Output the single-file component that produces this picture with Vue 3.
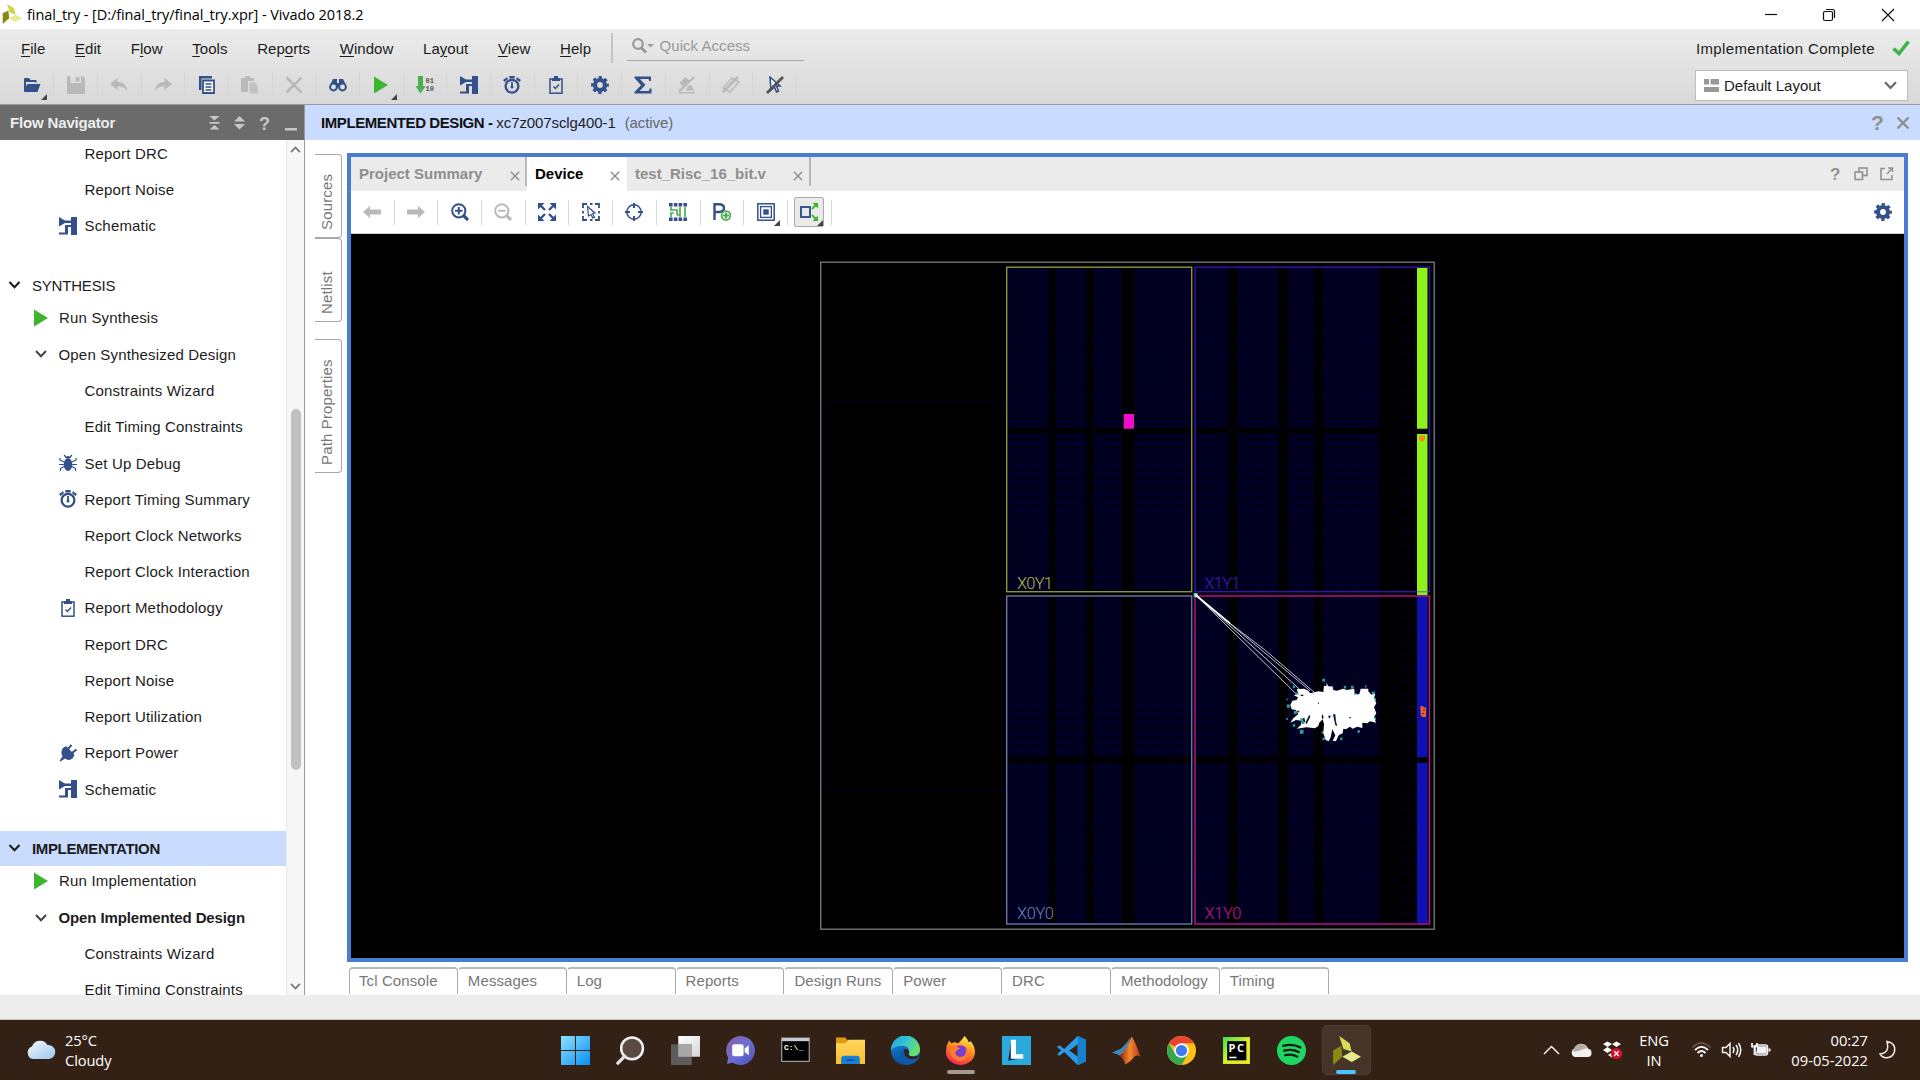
<script setup>
const menus = [
  ['', 'F', 'ile'], ['', 'E', 'dit'], ['F', 'l', 'ow'], ['', 'T', 'ools'], ['Rep', 'o', 'rts'],
  ['', 'W', 'indow'], ['La', 'y', 'out'], ['', 'V', 'iew'], ['', 'H', 'elp'],
]
const tools = [
  { i: 'open', c: 'navy', more: true }, { i: 'save', c: 'dim' }, { i: 'undo', c: 'dim' }, { i: 'redo', c: 'dim' },
  { i: 'copy', c: 'navy' }, { i: 'paste', c: 'dim' }, { i: 'cross', c: 'dim' }, { i: 'binoc', c: 'navy' },
  { i: 'play', c: 'green', more: true }, { i: 'bits', c: 'green' }, { i: 'schem', c: 'navy' }, { i: 'watch', c: 'navy' },
  { i: 'clip', c: 'navy' }, { i: 'gear', c: 'navy' }, { i: 'sigma', c: 'navy' }, { i: 'unmark', c: 'dim' },
  { i: 'unhigh', c: 'dim' }, { i: 'unsel', c: 'navy' },
]
const nav = [
  { k: 'leaf', t: 'Report DRC' }, { k: 'leaf', t: 'Report Noise' }, { k: 'leaf', t: 'Schematic', i: 'schem' },
  { k: 'head', t: 'SYNTHESIS' },
  { k: 'run', t: 'Run Synthesis' },
  { k: 'open', t: 'Open Synthesized Design' },
  { k: 'leaf', t: 'Constraints Wizard' }, { k: 'leaf', t: 'Edit Timing Constraints' },
  { k: 'leaf', t: 'Set Up Debug', i: 'bug' }, { k: 'leaf', t: 'Report Timing Summary', i: 'watch' },
  { k: 'leaf', t: 'Report Clock Networks' }, { k: 'leaf', t: 'Report Clock Interaction' },
  { k: 'leaf', t: 'Report Methodology', i: 'clip' }, { k: 'leaf', t: 'Report DRC' }, { k: 'leaf', t: 'Report Noise' },
  { k: 'leaf', t: 'Report Utilization' }, { k: 'leaf', t: 'Report Power', i: 'plug' }, { k: 'leaf', t: 'Schematic', i: 'schem' },
  { k: 'head', t: 'IMPLEMENTATION', on: true },
  { k: 'run', t: 'Run Implementation' },
  { k: 'open', t: 'Open Implemented Design', b: true },
  { k: 'leaf', t: 'Constraints Wizard' }, { k: 'leaf', t: 'Edit Timing Constraints' },
]
const devTools = [
  { i: 'left', c: 'dim' }, { i: 'right', c: 'dim' }, { i: 'zin', c: 'navy' }, { i: 'zout', c: 'dim' }, { i: 'fit', c: 'navy' },
  { i: 'selarea', c: 'navy' }, { i: 'target', c: 'navy' }, { i: 'route', c: 'navy' }, { i: 'pblock', c: 'navy' },
  { i: 'nest', c: 'navy', more: true }, { i: 'conn', c: 'navy', more: true, on: true },
]
const consoles = ['Tcl Console', 'Messages', 'Log', 'Reports', 'Design Runs', 'Power', 'DRC', 'Methodology', 'Timing']
const apps = ['win', 'find', 'tasks', 'chat', 'cmd', 'files', 'edge', 'fox', 'lapp', 'code', 'matlab', 'chrome', 'pycharm', 'spotify', 'vivado']

const cols = [
  [1008, 41], [1056, 30], [1093, 29], [1135, 56],
  [1196, 32], [1237, 41], [1288, 26], [1323, 56],
]
const bands = [[268, 160], [434, 157], [597, 160], [763, 160]]
const fabric = bands.flatMap(([y, h]) => cols.map(([x, w]) => ({ x, y, w, h })))
const gaps = [1049, 1086, 1228, 1278, 1314]
const gapTicks = [299, 331, 363, 395, 428, 466, 499, 532, 563, 628, 660, 692, 724, 795, 828, 860, 893]
  .flatMap(y => gaps.map(x => ({ x, y })))
const ioTicks = bands.flatMap(([y]) => Array.from({ length: 12 }, (_, n) => y + 6 + n * 13))
const specks = [
  [521, 330, 8], [432, 350, 7], [546, 351, 7], [585, 351, 7], [607, 351, 8], [647, 349, 5], [411, 388, 4], [415, 408, 9],
  [411, 446, 5], [432, 466, 7], [455, 485, 11], [440, 372, 9], [670, 370, 10], [674, 388, 8], [674, 446, 8], [626, 484, 7],
  [521, 506, 7], [575, 484, 8], [574, 506, 7], [565, 456, 8], [436, 427, 9], [518, 487, 6], [575, 370, 8], [616, 372, 7],
]
</script>

<template>
  <div class="screen">
    <svg class="defs" width="0" height="0">
      <defs>
        <linearGradient id="gWin" x1="0" y1="0" x2="1" y2="1"><stop offset="0" stop-color="#8be2ff" /><stop offset="1" stop-color="#0a8df5" /></linearGradient>
        <linearGradient id="gChat" x1="0" y1="0" x2="1" y2="1"><stop offset="0" stop-color="#8a5aa8" /><stop offset=".5" stop-color="#6d6fd0" /><stop offset="1" stop-color="#4a50c0" /></linearGradient>
        <linearGradient id="gFold" x1="0" y1="0" x2="0" y2="1"><stop offset="0" stop-color="#ffd75e" /><stop offset="1" stop-color="#fbbd2e" /></linearGradient>
        <linearGradient id="gEdge" x1="0" y1="0" x2="1" y2=".5"><stop offset="0" stop-color="#1fa0dc" /><stop offset=".5" stop-color="#35c1d8" /><stop offset="1" stop-color="#69e06a" /></linearGradient>
        <linearGradient id="gEdge2" x1="0" y1="0" x2="0" y2="1"><stop offset="0" stop-color="#1387d8" /><stop offset="1" stop-color="#0c4f9e" /></linearGradient>
        <linearGradient id="gFox" x1=".7" y1="0" x2=".3" y2="1"><stop offset="0" stop-color="#fff04a" /><stop offset=".45" stop-color="#ff8a1e" /><stop offset="1" stop-color="#f5205e" /></linearGradient>
        <linearGradient id="gTask" x1="0" y1="0" x2="1" y2="1"><stop offset="0" stop-color="#fff" /><stop offset="1" stop-color="#d5d5d5" /></linearGradient>
        <linearGradient id="gMat" x1="0" y1="0" x2="1" y2="0"><stop offset="0" stop-color="#8c1c10" /><stop offset=".5" stop-color="#f58a2a" /><stop offset="1" stop-color="#b5321a" /></linearGradient>
        <linearGradient id="gPc" x1="0" y1="0" x2="1" y2="1"><stop offset="0" stop-color="#3de05a" /><stop offset=".5" stop-color="#d8f02a" /><stop offset="1" stop-color="#f0e62a" /></linearGradient>
        <linearGradient id="gCloud" x1="0" y1="0" x2="1" y2="1"><stop offset="0" stop-color="#f4faff" /><stop offset="1" stop-color="#9cc6ee" /></linearGradient>
        <pattern id="grid" patternUnits="userSpaceOnUse" width="5" height="7.5">
          <rect width="5" height="7.5" fill="#00001a" /><path d="M0 .5H5" stroke="#00003a" /><path d="M.5 0V7.5" stroke="#00002a" />
        </pattern>
      </defs>
      <symbol id="logo" viewBox="0 0 28 28"><path d="M7 0L17 6L19 15L11 12Z" fill="#cfd24a" /><path d="M1 13L9 9L10 20L1 28Z" fill="#8a8a12" /><path d="M10 20L19 15L28 20L19 25Z" fill="#e6ea8e" /></symbol>
      <symbol id="open" viewBox="0 0 18 18"><path d="M1 15V3.200Q1 2 2.200 2H6L7.500 4H13.500V6.500H12V6H3V10.500L4.500 8H17.500L14.500 16H2Q1 16 1 15Z" fill="currentColor" /></symbol>
      <symbol id="save" viewBox="0 0 18 18"><path d="M0 0H3.500V7H14V0H15.500L18 2.500V18H0ZM8.500 1H12.500V5.500H8.500Z" fill="currentColor" /></symbol>
      <symbol id="undo" viewBox="0 0 18 18"><path d="M0 8L7.500 2V5.800Q16 6 17.500 15Q13.500 10 7.500 10.300V14Z" fill="currentColor" /></symbol>
      <symbol id="redo" viewBox="0 0 18 18"><path d="M18 8L10.500 2V5.800Q2 6 .5 15Q4.500 10 10.500 10.300V14Z" fill="currentColor" /></symbol>
      <symbol id="copy" viewBox="0 0 18 18"><path d="M1 0H14V2.500H3.500V14H1Z" fill="currentColor" /><path d="M5 4.500H16V17H5Z" fill="#fff" stroke="currentColor" stroke-width="1.800" /><path d="M7.500 8H13.500M7.500 11H13.500M7.500 14H13.500" stroke="currentColor" stroke-width="1.400" /></symbol>
      <symbol id="paste" viewBox="0 0 18 18"><path d="M0 2H4V0H9V2H13V5H7V16H0Z" fill="currentColor" /><path d="M8.500 6.500H13.500L17 10V17.500H8.500Z" fill="currentColor" opacity=".75" /></symbol>
      <symbol id="cross" viewBox="0 0 18 18"><path d="M1.500 1.500L16.500 16.500M16.500 1.500L1.500 16.500" stroke="currentColor" stroke-width="2.600" /></symbol>
      <symbol id="binoc" viewBox="0 0 18 18"><path d="M4 3H8V7H10V3H14L17 9V11H1V9Z" fill="currentColor" /><circle cx="4.500" cy="11" r="3.400" fill="#dfe3ec" stroke="currentColor" stroke-width="2" /><circle cx="13.500" cy="11" r="3.400" fill="#dfe3ec" stroke="currentColor" stroke-width="2" /></symbol>
      <symbol id="play" viewBox="0 0 18 18"><path d="M2 .5L16 9L2 17.500Z" fill="#3fb52f" /></symbol>
      <symbol id="bits" viewBox="0 0 18 18"><path d="M2 0H7V10H9.500L4.500 17.500L-.5 10H2Z" fill="#4caf50" /></symbol>
      <symbol id="schem" viewBox="0 0 18 18"><path d="M0 0L6 3.500H12V0H18V18H12V10H9V17.500H0V15.500H6V8H12V6H6L0 9.500Z" fill="currentColor" /></symbol>
      <symbol id="watch" viewBox="0 0 18 18"><circle cx="9" cy="10.200" r="6.400" fill="none" stroke="currentColor" stroke-width="2.300" /><path d="M6.300 0H11.700V2.500H6.300ZM0 4L4 1.200L5 3L1.500 6ZM18 4L14 1.200L13 3L16.500 6Z" fill="currentColor" /><path d="M9 6V11" stroke="currentColor" stroke-width="1.800" /><circle cx="9" cy="11" r="1.500" fill="currentColor" /></symbol>
      <symbol id="clip" viewBox="0 0 18 18"><rect x="3" y="3" width="12" height="14.200" fill="none" stroke="currentColor" stroke-width="1.500" /><path d="M5 2H7V0H11V2H13V5H5Z" fill="currentColor" /><path d="M6.500 10.500L8.500 12.500L12 8.500" fill="none" stroke="currentColor" stroke-width="1.500" /></symbol>
      <symbol id="gear" viewBox="0 0 18 18"><circle cx="9" cy="9" r="5" fill="none" stroke="currentColor" stroke-width="4.200" /><circle cx="9" cy="9" r="7.600" fill="none" stroke="currentColor" stroke-width="2.600" stroke-dasharray="3.300 2.670" stroke-dashoffset="1.650" /></symbol>
      <symbol id="sigma" viewBox="0 0 18 18"><path d="M.5 .5H17V5H15.300L14.500 3H6L11.500 9L5.500 15H14.800L15.800 12.500H17.500V17.500H.5V16L7 9.200L.5 2Z" fill="currentColor" /></symbol>
      <symbol id="unmark" viewBox="0 0 18 18"><path d="M1.500 7L7.500 1L12 5.500L6 11.500Z" fill="currentColor" /><path d="M9.500 10.500L13 9L16.500 14.500H8ZM1 16H17V17.500H1Z" fill="currentColor" /><path d="M1 15.500L16 1" stroke="currentColor" stroke-width="2.200" /></symbol>
      <symbol id="unhigh" viewBox="0 0 18 18"><path d="M1 12L10 2L17 6L8 16Z" fill="none" stroke="currentColor" stroke-width="1.400" /><path d="M1 16L16 1" stroke="currentColor" stroke-width="2.600" /></symbol>
      <symbol id="unsel" viewBox="0 0 18 18"><path d="M4 1L14 10H10.500L12.500 15L10.500 16L8.500 11L5 14Z" fill="#fff" stroke="currentColor" stroke-width="1.600" /><path d="M1 17L17 1" stroke="#555" stroke-width="2.800" /></symbol>
      <symbol id="bug" viewBox="0 0 18 18"><ellipse cx="9" cy="10.500" rx="4.300" ry="6.500" fill="currentColor" /><path d="M5.500 4Q9 0 12.500 4Z" fill="currentColor" /><path d="M5 1L7 3M13 1L11 3M1 4V6L5 8M17 4V6L13 8M0 10.500H18M1.500 17V14.500L5 12.500M16.500 17V14.500L13 12.500" fill="none" stroke="currentColor" stroke-width="1.200" /></symbol>
      <symbol id="plug" viewBox="0 0 18 18"><path d="M4 4L7 2L15.500 10.500L14 14Q10 17.500 6 14.500L1.500 17.500L.5 16.500L3.500 12.500Q1 8 4 4Z" fill="currentColor" /><path d="M9 5L12.500 .8M13 9L17.500 5.500" stroke="currentColor" stroke-width="2" /></symbol>
      <symbol id="left" viewBox="0 0 18 18"><path d="M0 9L7 3V6.500H18V11.500H7V15Z" fill="currentColor" /></symbol>
      <symbol id="right" viewBox="0 0 18 18"><path d="M18 9L11 3V6.500H0V11.500H11V15Z" fill="currentColor" /></symbol>
      <symbol id="zin" viewBox="0 0 18 18"><circle cx="7.800" cy="7.800" r="6.600" fill="none" stroke="currentColor" stroke-width="2" /><path d="M12.500 12.500L17 17" stroke="currentColor" stroke-width="3.200" /><path d="M4 7.800H11.600M7.800 4V11.600" stroke="currentColor" stroke-width="2" /></symbol>
      <symbol id="zout" viewBox="0 0 18 18"><circle cx="7.800" cy="7.800" r="6.600" fill="none" stroke="currentColor" stroke-width="2" /><path d="M12.500 12.500L17 17" stroke="currentColor" stroke-width="3.200" /><path d="M4 7.800H11.600" stroke="currentColor" stroke-width="1.800" /></symbol>
      <symbol id="fit" viewBox="0 0 18 18"><path d="M0 0H6.500L0 6.500ZM18 0H11.500L18 6.500ZM0 18H6.500L0 11.500ZM18 18H11.500L18 11.500Z" fill="currentColor" /><path d="M2 2L7 7M16 2L11 7M2 16L7 11M16 16L11 11" stroke="currentColor" stroke-width="2.400" /></symbol>
      <symbol id="selarea" viewBox="0 0 18 18"><path d="M1 5V1H5M13 1H17V5M17 13V17H13M5 17H1V13M8 1H10.500M8 17H10.500M1 8V10.500M17 8V10.500" fill="none" stroke="currentColor" stroke-width="1.800" /><path d="M5.500 3.500L13 10L10.500 10.500L12.500 14.500L10.800 15L9 11.500L6.500 13Z" fill="#fff" stroke="currentColor" stroke-width="1.200" /></symbol>
      <symbol id="target" viewBox="0 0 18 18"><circle cx="9" cy="9" r="7.200" fill="none" stroke="currentColor" stroke-width="1.500" /><path d="M9 0V5M9 13V18M0 9H5M13 9H18" stroke="currentColor" stroke-width="2" /></symbol>
      <symbol id="route" viewBox="0 0 18 18"><path d="M0 1.800H18M0 16.200H18" stroke="currentColor" stroke-width="3.400" stroke-dasharray="3.600 1.200" /><path d="M2 4V7H8V12M2 14V10H5M11 4V14M16 4V14M8 12H11" fill="none" stroke="#4caf50" stroke-width="1.700" /></symbol>
      <symbol id="pblock" viewBox="0 0 18 18"><path d="M1.500 17V1.200H6Q11 1.200 11 5T6 9H2" fill="none" stroke="currentColor" stroke-width="2.400" /><circle cx="13" cy="12.500" r="4.400" fill="#fff" stroke="#4caf50" stroke-width="1.800" /><path d="M13 9.500V15.500M10 12.500H16" stroke="#4caf50" stroke-width="2" /></symbol>
      <symbol id="nest" viewBox="0 0 18 18"><rect x=".8" y=".8" width="16.400" height="16.400" fill="none" stroke="currentColor" stroke-width="1.500" /><rect x="3.600" y="3.600" width="10.800" height="10.800" fill="none" stroke="currentColor" stroke-width="1.300" /><rect x="6.300" y="6.300" width="5.400" height="5.400" fill="currentColor" /></symbol>
      <symbol id="conn" viewBox="0 0 18 18"><rect x="1" y="4" width="9" height="10" fill="none" stroke="currentColor" stroke-width="1.900" /><path d="M12 6L16.500 1.500M12 12L16.500 16.500" stroke="#3fb52f" stroke-width="1.800" /><path d="M12.500 0H18V5.500ZM12.500 18H18V12.500Z" fill="#3fb52f" /></symbol>
      <symbol id="chev" viewBox="0 0 12 8"><path d="M1 1L6 6.300L11 1" fill="none" stroke="currentColor" stroke-width="2" /></symbol>

      <symbol id="win" viewBox="0 0 28 28"><path d="M0 0H13.500V13.500H0ZM14.500 0H28V13.500H14.500ZM0 14.500H13.500V28H0ZM14.500 14.500H28V28H14.500Z" fill="url(#gWin)" /></symbol>
      <symbol id="find" viewBox="0 0 28 28"><circle cx="15.500" cy="12" r="10.500" fill="#5a4a42" stroke="#f2f2f2" stroke-width="2.400" /><path d="M8.500 19.500L1.800 26.200" stroke="#e0e4ea" stroke-width="3.200" stroke-linecap="round" /></symbol>
      <symbol id="tasks" viewBox="0 0 28 28"><path d="M7 0H28V20H7Z" fill="url(#gTask)" /><path d="M0 8H20V28H0Z" fill="#666" opacity=".85" /><path d="M7 8H20V20H7Z" fill="#a8a8a8" /></symbol>
      <symbol id="chat" viewBox="0 0 28 28"><path d="M14 0A14 14 0 1 1 6 25.500L1 27L2 21A14 14 0 0 1 14 0Z" fill="url(#gChat)" /><rect x="6" y="8" width="11" height="11.500" rx="2" fill="#fff" /><path d="M18 12L22 9V18.500L18 15.500Z" fill="#fff" /></symbol>
      <symbol id="cmd" viewBox="0 0 28 28"><rect x=".7" y="2" width="26.600" height="22.500" fill="#000" stroke="#999" stroke-width="1.200" /><path d="M1 2H27V5H1Z" fill="#c8ccd2" /></symbol>
      <symbol id="files" viewBox="0 0 28 28"><path d="M0 1.500H9L12 5V9H0Z" fill="#e09a10" /><path d="M0 7H9L12 3.500H28V27H0Z" fill="url(#gFold)" /><path d="M5 27V22Q5 19 8 19H20Q23 19 23 22V27Z" fill="#1a7fd0" /><path d="M10 22.500H18V24H10Z" fill="#0a4d94" /></symbol>
      <symbol id="edge" viewBox="0 0 28 28"><circle cx="14" cy="14" r="14" fill="url(#gEdge2)" /><path d="M0 14A14 14 0 0 1 28 13Q28 19 21.500 19.500Q16 19.500 17.500 16.500Q18.500 10.500 12 9.500Q4 9 0 14Z" fill="url(#gEdge)" /><path d="M28 20Q24 28 14 28Q7 25 9 17Q10 12 14 12Q12 15 14 19Q18 24 26 20Z" fill="#0c5aa8" /><path d="M13 12.500Q17 12 17.500 16Q16 19 19 19.500Q24 20.500 27 18.500L26 21Q19 24.500 14.500 20Q11.500 16 13 12.500Z" fill="#352117" /></symbol>
      <symbol id="fox" viewBox="0 0 28 28"><path d="M18 0Q21 3 22 6L24 5Q28 10 28 16A14 12.500 0 0 1 0 15Q0 9 3 4L5 7Q7 6 9 6Q10 7 12 7Q15 4 18 0Z" fill="url(#gFox)" /><circle cx="14" cy="15.500" r="6.500" fill="#7b3bd6" /><path d="M4 11Q9 9 14 12Q10 13 9 16Q10 21 15 20Q20 19 19 12Q24 18 19 23Q12 27 6 21Q3 16 4 11Z" fill="#ff7a2a" /></symbol>
      <symbol id="lapp" viewBox="0 0 28 28"><path d="M-1 -1H29V29H-1Z" fill="#29a9dc" /><path d="M6 24L9 4V21H20Z" fill="#0d2b52" /><path d="M8.500 3.500H13.500V17.500H20.500V22H8.500Z" fill="#fff" /></symbol>
      <symbol id="code" viewBox="0 0 28 28"><path d="M20 0L28 3.500V24.500L20 28L7 15.500L2.500 19L0 17.500L4 14L0 10.500L2.500 9L7 12.500ZM20 8L12 14L20 20Z" fill="#2a9be8" /><path d="M20 0L28 3.500V24.500L20 28Z" fill="#1580cc" /></symbol>
      <symbol id="matlab" viewBox="0 0 28 28"><path d="M0 16L8 12.500Q13 9 18 1Q15 14 9 20L6 18Z" fill="#3f86b8" /><path d="M19 .5Q22 4 27.500 20Q23 17 20 22Q16 26 13 27.500Q10 20 7 19Q14 14 19 .5Z" fill="url(#gMat)" /></symbol>
      <symbol id="chrome" viewBox="0 0 28 28"><circle cx="14" cy="14" r="14" fill="#fbc116" /><path d="M14 14L1.900 7A14 14 0 0 1 26.100 7H14Z" fill="#ea4335" /><path d="M1.900 7A14 14 0 0 0 14 28L20 17.500L8 17.500Z" fill="#34a853" /><circle cx="14" cy="14" r="7" fill="#fff" /><circle cx="14" cy="14" r="5.400" fill="#3b7ded" /></symbol>
      <symbol id="pycharm" viewBox="0 0 28 28"><rect x="1" y="1" width="26" height="26" fill="url(#gPc)" /><rect x="5" y="5" width="18.500" height="18.500" fill="#000" /><path d="M7 20H14V21.500H7Z" fill="#fff" /></symbol>
      <symbol id="spotify" viewBox="0 0 28 28"><circle cx="14" cy="14" r="14" fill="#1ed760" /><path d="M6 9.500Q15 7 22.500 11M7 14.200Q14.500 12 21 15.500M8 18.500Q14 17 19.500 19.800" fill="none" stroke="#1b1a16" stroke-width="2.300" stroke-linecap="round" /></symbol>
      <symbol id="vivado" viewBox="0 0 28 28"><path d="M7 0L17 7L19 15L11 12.500Z" fill="#d6dc55" /><path d="M1 14L9 9.500L10 20L1 28Z" fill="#8a8a12" /><path d="M10 20L19 15L28 20L19 25Z" fill="#e6ea8e" /></symbol>
    </svg>

    <div class="title">
      <svg class="tlogo"><use href="#logo" /></svg>
      <span class="ttext">final_try - [D:/final_try/final_try.xpr] - Vivado 2018.2</span>
      <svg class="wctl" viewBox="0 0 132 16" fill="none" stroke="#111" stroke-width="1.200">
        <path d="M1 7.500H13" /><rect x="59.500" y="4.500" width="9" height="9" rx="1.500" /><path d="M62 2.500H68.500Q70.500 2.500 70.500 4.500V11" /><path d="M118 2L130 14M130 2L118 14" />
      </svg>
    </div>

    <div class="top">
      <div class="bars">
        <div class="menu">
          <span v-for="m in menus" :key="m[2]" class="mi">{{ m[0] }}<u>{{ m[1] }}</u>{{ m[2] }}</span>
          <div class="quick">
            <svg width="22" height="16" viewBox="0 0 22 16"><circle cx="6" cy="6" r="4.800" fill="none" stroke="#999" stroke-width="2.200" /><path d="M9.500 10L14 14.500" stroke="#999" stroke-width="2.800" /><path d="M15 6H22L18.500 9.500Z" fill="#999" /></svg>
            <span>Quick Access</span>
          </div>
        </div>
        <div class="tools">
          <div v-for="t in tools" :key="t.i" class="tool" :class="t.c">
            <svg class="ic">
              <use :href="'#' + t.i" />
              <g v-if="t.i === 'bits'" class="bit"><text x="9.500" y="6.500">01</text><text x="9.500" y="14.500">10</text></g>
            </svg>
            <i v-if="t.more" class="more"></i>
          </div>
        </div>
      </div>
      <div class="status">
        <div class="done"><span>Implementation Complete</span><svg width="18" height="16" viewBox="0 0 18 16"><path d="M1.500 8.500L7 13.500L16.500 1.500" fill="none" stroke="#3cb44a" stroke-width="3.600" /></svg></div>
        <div class="combo">
          <svg width="15" height="13"><path d="M0 0H5V5.500H0ZM6.500 0H15V5.500H6.500ZM0 8H15V13H0Z" fill="#999" /></svg>
          <span>Default Layout</span>
          <svg class="cchev" width="13" height="9"><use href="#chev" /></svg>
        </div>
      </div>
    </div>

    <div class="body">
      <aside class="nav">
        <div class="navhead">
          <b>Flow Navigator</b>
          <svg width="88" height="16" viewBox="1 0 88 16"><g fill="#c8c8c8"><path d="M1.500 1H11.500L6.500 5.500ZM1.500 7H11.500V8.800H1.500ZM1.500 14.500H11.500L6.500 10Z" /><path d="M26 6.500H37L31.500 1ZM26 9H37L31.500 14.500Z" /><path d="M77 13H89V15.500H77Z" /></g><text x="51" y="14.500" font-size="18" font-weight="700" fill="#c8c8c8">?</text></svg>
        </div>
        <div class="navbody">
          <div class="list">
            <div v-for="(n, k) in nav" :key="k" class="row" :class="[n.k, { on: n.on, strong: n.b }]">
              <span class="slot">
                <svg v-if="n.k === 'leaf' && n.i" class="ic navy"><use :href="'#' + n.i" /></svg>
                <svg v-else-if="n.k === 'run'" class="ic"><use href="#play" /></svg>
                <svg v-else-if="n.k !== 'leaf'" class="chev"><use href="#chev" /></svg>
              </span>
              <span class="lb">{{ n.t }}</span>
            </div>
          </div>
          <div class="scroll">
            <svg class="sa up"><use href="#chev" /></svg>
            <div class="thumb"></div>
            <svg class="sa dn"><use href="#chev" /></svg>
          </div>
        </div>
      </aside>

      <main class="main">
        <div class="dhead">
          <span class="dt"><b>IMPLEMENTED DESIGN - </b>xc7z007sclg400-1<em>(active)</em></span>
          <svg width="40" height="20" viewBox="0 0 40 20"><text x="1" y="17" font-size="21" font-weight="700" fill="#8e8e8e">?</text><path d="M27.500 4.500L38.500 15.500M38.500 4.500L27.500 15.500" stroke="#8e8e8e" stroke-width="2.400" /></svg>
        </div>
        <div class="work">
          <div class="side">
            <span class="st s1">Sources</span><span class="st s1">Netlist</span><span class="st s2">Path Properties</span>
          </div>
          <div class="center">
            <section class="panel">
              <div class="tabs">
                <div class="tab t1">Project Summary<svg class="x"><use href="#cross" /></svg></div>
                <div class="tab t2">Device<svg class="x"><use href="#cross" /></svg></div>
                <div class="tab t3">test_Risc_16_bit.v<svg class="x"><use href="#cross" /></svg></div>
                <svg class="tctl" width="64" height="16" viewBox="0 0 64 16"><text x="0" y="14" font-size="17" font-weight="700" fill="#929292">?</text><g fill="none" stroke="#929292" stroke-width="1.600"><rect x="29" y="2" width="8" height="7.500" /><rect x="25" y="6" width="7.500" height="7.500" fill="#ebebeb" /><path d="M55 2.500H51V13.500H62V9M57 8L62 2.500M58 2H62.500V6" /></g></svg>
              </div>
              <div class="dtools">
                <div v-for="t in devTools" :key="t.i" class="dtool" :class="t.c">
                  <div class="dbtn" :class="{ on: t.on }"><svg class="ic"><use :href="'#' + t.i" /></svg><i v-if="t.more" class="more"></i></div>
                </div>
                <svg class="ic navy dgear"><use href="#gear" /></svg>
              </div>
              <svg class="canvas" viewBox="351 234 1553 724" preserveAspectRatio="none">
                <rect x="351" y="234" width="1553" height="724" fill="#000" />
                <path d="M1007 402.500H825.500V789.500H1007" fill="none" stroke="#00002a" />
                <rect v-for="(f, k) in fabric" :key="'f' + k" :x="f.x" :y="f.y" :width="f.w" :height="f.h" fill="url(#grid)" />
                <rect v-for="(g, k) in gapTicks" :key="'g' + k" :x="g.x" :y="g.y" width="8" height="1" fill="#000020" />
                <rect v-for="y in ioTicks" :key="'t' + y" x="1401" :y="y" width="16" height="1" fill="#00002c" />
                <path d="M1393.500 268V923M1401.500 268V923" stroke="#000014" />
                <g fill="none" stroke-width="1.400">
                  <rect x="820.700" y="262.200" width="613.500" height="667" stroke="#757575" />
                  <rect x="1195" y="267.200" width="234.500" height="324.500" stroke="#3a12b4" />
                </g>
                <path d="M1417 268H1427.500V428.700H1417ZM1417 434H1427.500V595H1417Z" fill="#8cf21a" />
                <path d="M1417 596H1427.500V757H1417ZM1417 762.700H1427.500V923.500H1417Z" fill="#100fb4" />
                <path d="M1417 591.700H1427.500" stroke="#6a8a8a" stroke-width="1.400" />
                <g fill="none" stroke-width="1.400">
                  <rect x="1006.700" y="267.200" width="185" height="324.500" stroke="#8a9440" />
                  <rect x="1006.700" y="596" width="185" height="328" stroke="#6478b0" />
                  <rect x="1195" y="596" width="234.500" height="328" stroke="#c0128f" />
                </g>
                <rect x="1123.700" y="414" width="10.300" height="14.700" fill="#f20ccb" />
                <path d="M1419 436L1425 435V440L1422 442L1419 440Z" fill="#ff8a10" />
                <path d="M1420.500 706H1423L1424 708L1426 707V717H1422L1420.500 714Z" fill="#f06018" /><path d="M1423 710H1425M1422 713.500H1424" stroke="#3018a0" />
                <g class="lbl">
                  <text x="1017" y="588.800" textLength="36" fill="#b4bc4c">X0Y1</text>
                  <text x="1204.500" y="588.800" textLength="36" fill="#4419c0">X1Y1</text>
                  <text x="1017" y="918.800" textLength="37" fill="#6c80bc">X0Y0</text>
                  <text x="1204.500" y="918.800" textLength="37" fill="#c8148f">X1Y0</text>
                </g>
                <g transform="translate(1150 570) scale(.33333)">
                  <rect x="131" y="69" width="12" height="13" fill="#58c8d0" />
                  <g fill="none" stroke="#fff" stroke-width="3">
                    <path d="M137 75L300 236L445 378" opacity=".75" /><path d="M137 75L270 195L462 370" opacity=".8" />
                    <path d="M137 75L265 182L480 362" opacity=".75" /><path d="M137 75L240 160L345 240L493 367" opacity=".75" /><path d="M137 75L240 160" stroke-width="5" />
                  </g>
                  <rect v-for="(s, k) in specks" :key="'s' + k" :x="s[0] - s[2] / 2" :y="s[1] - s[2] / 2" :width="s[2]" :height="s[2] + 1" fill="#2a9c9c" />
                  <path d="M421 405L427 392L440 390L444 382L431 376L446 373L440 358L462 356L475 362L480 370L505 364L520 366L522 347L529 349L530 338L534 348L547 351L550 360L560 362L580 356L590 360L612 356L614 364L612 374L628 372L632 356L655 356L655 364L664 374L676 372L672 385L679 400L672 412L679 430L672 442L678 458L660 454L652 460L637 458L637 474L622 470L608 476L600 470L588 478L580 476L578 490L566 496L558 514L548 512L556 496L547 478L542 502L536 514L527 510L520 490L522 462L518 448L508 458L505 468L495 475L470 472L440 476L452 466L456 452L438 450L421 458L430 445L445 432L438 420L425 418Z" fill="#fff" />
                  <path d="M456 447L463 443L466 455L458 458ZM466 458L478 434L481 440L470 462ZM515 438L518 432L521 444L516 447ZM534 437H543L538 446ZM549 433H556L558 455L562 468L556 466L552 448ZM442 422H448V427H442ZM503 400L507 397V402ZM598 441H602V445H598ZM452 374H460V378H452Z" fill="#0a1830" />
                  <path d="M450 445H458L464 462H456Z" fill="#2a9c9c" />
                </g>
              </svg>
            </section>
            <div class="consoles"><span v-for="c in consoles" :key="c">{{ c }}</span></div>
          </div>
        </div>
      </main>
    </div>
    <div class="foot"></div>

    <div class="taskbar">
      <div class="weather">
        <svg width="30" height="24" viewBox="0 0 30 24"><path d="M7 21A6.500 6.500 0 0 1 6 8.500A8.500 8.500 0 0 1 21.500 7A7 7 0 0 1 23 21Z" fill="url(#gCloud)" /></svg>
        <div>25°C<br />Cloudy</div>
      </div>
      <div class="apps">
        <div v-for="a in apps" :key="a" class="app" :class="a">
          <svg>
            <use :href="'#' + a" />
            <text v-if="a === 'cmd'" class="prompt" x="3" y="14">C:\_</text>
            <text v-if="a === 'pycharm'" class="pc" x="6.500" y="16" textLength="15.500">PC</text>
          </svg>
        </div>
      </div>
      <div class="tray">
        <svg class="icons1" width="84" height="24" viewBox="0 0 84 24"><path d="M1 16L8.500 8.500L16 16" fill="none" stroke="#eee" stroke-width="1.500" /><path d="M32 19A4.500 4.500 0 0 1 31.500 10.500Q34 5 39.500 6Q43.500 6.500 45 10.500L48 12Q50 19 45 19Z" fill="#f2f2f2" /><path d="M30 14Q31 7 37 6Q42 6 44 10L35 13Z" fill="#b5aea8" /><path d="M60 6L64.500 3.500L69 6L64.500 9ZM69 6L73.500 3.500L78 6L73.500 9ZM60 12L64.500 9L69 12L64.500 15ZM65 17L69 14.500L72 17L69 19.500Z" fill="#fff" /><circle cx="73.500" cy="15.500" r="5.600" fill="#d8102c" /><path d="M71.300 13.300L75.700 17.700M75.700 13.300L71.300 17.700" stroke="#fff" stroke-width="1.300" /></svg>
        <div class="lang">ENG<br />IN</div>
        <svg class="icons2" width="82" height="24" viewBox="0 0 82 24" fill="none" stroke="#f2f2f2" stroke-width="1.500"><path d="M1.500 9.500Q10 .5 19.500 9.500" stroke="#6a5c52" /><path d="M4 12Q10.500 5.500 17 12M6.500 15Q10.500 11 14.500 15" stroke-width="1.800" /><circle cx="10.500" cy="17.500" r="1.500" fill="#f2f2f2" stroke="none" /><path d="M31.500 9.500H35L39 5.500V18.500L35 14.500H31.500ZM42 9Q44 12 42 15M45 7Q48.500 12 45 17M47.500 5Q52 12 47.500 19" /><rect x="64" y="7" width="12.500" height="10" rx="2" /><path d="M67 9H75V15H66Z" fill="#f2f2f2" /><path d="M78.500 10.500V13.500" stroke-width="2" /><path d="M61 5V8.500H66V5M63.500 8.500V17" stroke-width="1.800" /></svg>
        <div class="clock">00:27<br />09-05-2022</div>
        <svg width="20" height="22" viewBox="0 0 20 22"><path d="M9 2.500Q18 4 16.500 12.500Q14 20 6.500 18.500Q3 17.500 2 15Q12 14 9 2.500Z" fill="none" stroke="#eee" stroke-width="1.500" /></svg>
      </div>
    </div>
  </div>
</template>

<style>
html, body { margin: 0; background: #fff; }
</style>

<style scoped>
.screen { width: 1920px; height: 1080px; overflow: hidden; display: flex; flex-direction: column; background: #fff; font: 15px/18px "Liberation Sans", Arial, sans-serif; color: #1c1c1c; white-space: nowrap; position: relative; }
.defs { position: absolute; }
svg text { font-family: "Liberation Sans", Arial, sans-serif; }
.ic { width: 18px; height: 18px; display: block; overflow: visible; }
.navy { color: #33508a; }
.dim { color: #b9b9b9; }
.title { height: 29px; flex: none; display: flex; align-items: center; font: 14.500px/20px "Open Sans", sans-serif; color: #000; }
.tlogo { width: 20px; height: 20px; margin: 0 5px 2px 2px; }
.ttext { letter-spacing: -.08px; }
.wctl { width: 132px; height: 16px; margin-left: auto; margin-right: 24px; }
.top { height: 75px; flex: none; display: flex; justify-content: space-between; background: linear-gradient(#ececec, #d8d8d8); border-bottom: 1px solid #999; }
.bars { display: flex; flex-direction: column; }
.menu { height: 38px; display: flex; align-items: center; padding-left: 21px; letter-spacing: .04px; }
.mi { margin-right: 29.700px; padding-top: 2px; }
.mi u { text-underline-offset: 2px; text-decoration-thickness: 1px; }
.mi:nth-child(9) { margin-right: 19.500px; }
.quick { display: flex; align-items: center; border-left: 2px solid #c4c4c4; height: 30px; padding-left: 14px; color: #999; position: relative; }
.quick svg { margin: 0 6px 4px 5px; }
.quick span { padding-bottom: 4px; width: 144px; }
.quick::after { content: ""; position: absolute; left: 14px; right: 0; bottom: 2px; height: 1.500px; background: #aaa; }
.tools { height: 36px; display: flex; align-items: center; padding-left: 10.500px; }
.tool { width: 42.700px; height: 26px; display: flex; align-items: center; justify-content: center; border-right: 1px solid #d6d6d6; position: relative; }
.bit text { font: 700 7px "Liberation Mono", monospace; fill: #555; }
.more { position: absolute; right: 5px; bottom: -1px; border-left: 6px solid transparent; border-bottom: 6px solid #444; }
.tool .more { right: 6px; bottom: -2px; }
.status { padding: 10px 11px 0 0; width: 214px; }
.done { display: flex; align-items: center; justify-content: space-between; padding-left: 1px; letter-spacing: .35px; margin-bottom: 12px; height: 19px; }
.done svg { margin: 0 -1px 2px 0; }
.combo { width: 211px; height: 29px; border: 1px solid #bdbdbd; background: #fff; display: flex; align-items: center; gap: 5px; }
.combo svg:first-child { margin-left: 8px; }
.cchev { margin-left: auto; margin-right: 10px; color: #666; }
.body { flex: 1; min-height: 0; display: flex; }
.nav { width: 304px; flex: none; border-right: 1px solid #999; display: flex; flex-direction: column; }
.navhead { height: 35px; flex: none; background: #6b6b6b; color: #eee; display: flex; align-items: center; justify-content: space-between; padding: 0 7px 0 10px; letter-spacing: -.16px; }
.navbody { flex: 1; min-height: 0; display: flex; }
.list { width: 286px; overflow: hidden; letter-spacing: .18px; }
.row { display: flex; align-items: center; height: 36.220px; }
.row:first-child { margin-top: -4.700px; }
.lb { padding-top: 1px; }
.slot { flex: none; display: flex; justify-content: center; }
.leaf .slot { width: 18px; margin: 0 8px 0 58.500px; }
.run { height: 30px; margin-bottom: 3.500px; }
.run .slot { width: 18px; margin: 0 9px 0 32px; }
.open .slot { width: 14px; margin: 0 11px 0 33.500px; color: #444; }
.open .chev { width: 12px; }
.head { height: 35px; margin-top: 23.800px; letter-spacing: -.2px; }
.head .slot { width: 14px; margin: 0 11px 0 7px; }
.chev { width: 13px; height: 8px; }
.on { background: #c9dcff; font-weight: 700; letter-spacing: -.35px; }
.strong { font-weight: 700; letter-spacing: -.12px; }
.scroll { width: 18px; background: #f7f7f7; border-left: 1px solid #e8e8e8; box-sizing: border-box; display: flex; flex-direction: column; align-items: center; }
.thumb { width: 10px; height: 361px; border-radius: 5px; background: #c0c0c0; margin-top: 256px; }
.sa { width: 11px; height: 7px; color: #777; }
.up { transform: rotate(180deg); margin-top: 6px; }
.dn { margin-top: auto; margin-bottom: 5px; }
.main { flex: 1; min-width: 0; display: flex; flex-direction: column; }
.dhead { height: 35px; flex: none; background: #c9dcff; display: flex; align-items: center; justify-content: space-between; padding: 0 10px 0 16px; color: #222; }
.dt { padding-top: 1px; letter-spacing: -.1px; }
.dhead b { color: #111; letter-spacing: -.42px; }
.dhead em { font-style: normal; color: #666; margin-left: 9px; }
.work { flex: 1; min-height: 0; display: flex; }
.side { width: 42px; flex: none; padding-top: 14px; display: flex; flex-direction: column; }
.st { writing-mode: vertical-rl; transform: rotate(180deg); box-sizing: border-box; width: 27px; margin-left: 10px; border: 1.500px solid #a8a8a8; border-right: 0; border-radius: 4px 0 0 4px; color: #777; line-height: 24px; padding-top: 7px; letter-spacing: .15px; }
.s1 { height: 84px; }
.s2 { height: 134px; margin-top: 17px; }
.center { flex: 1; min-width: 0; padding-top: 13px; }
.panel { width: 1553px; height: 801px; border: 4px solid #4a7cd0; display: flex; flex-direction: column; }
.tabs { height: 34px; flex: none; background: #ebebeb; display: flex; align-items: center; color: #8e8e8e; font-weight: 700; }
.tab { box-sizing: border-box; height: 34px; padding: 0 7px 0 8px; display: flex; align-items: center; justify-content: space-between; position: relative; }
.x { width: 10px; height: 10px; margin-top: 3px; color: #8e8e8e; }
.t1 { width: 176px; }
.t1::after, .t3::after { content: ""; position: absolute; right: 0; top: 0; width: 2px; height: 29px; background: #b8b8b8; }
.t2 { width: 100px; background: #fff; color: #000; }
.t3 { width: 184px; }
.t3 .x { margin-right: 1.500px; }
.tctl { margin-left: auto; margin-right: 10px; }
.dtools { height: 43px; flex: none; display: flex; align-items: center; background: #fff; border-bottom: 1px solid #ccc; box-sizing: border-box; }
.dtool { width: 43.700px; height: 25px; box-sizing: border-box; border-right: 1px solid #d8d8d8; display: flex; align-items: center; justify-content: center; }
.dbtn { width: 28px; height: 28px; flex: none; display: flex; align-items: center; justify-content: center; border: 1px solid transparent; position: relative; }
.dbtn .more { right: 0; bottom: 0; }
.on.dbtn { background: #eaeaea; border-color: #aaa; border-radius: 2px; }
.dgear { margin-left: auto; margin-right: 12.500px; }
.canvas { width: 1553px; height: 724px; display: block; }
.lbl text { font: 300 16.500px "Roboto", "Open Sans", sans-serif; }
.consoles { display: flex; margin: 5px 0 0 2px; color: #777; letter-spacing: .1px; }
.consoles span { box-sizing: border-box; width: 108.850px; height: 27px; padding-left: 9px; line-height: 24px; border: 1px solid #aaa; border-top: 2px solid #b8b8b8; border-bottom: 0; border-radius: 4px 4px 0 0; }
.consoles span + span { border-left-color: transparent; }
.foot { height: 24px; flex: none; background: #ededed; border-bottom: 1px solid #c8c4b8; }
.taskbar { height: 60px; flex: none; background: #342116; display: flex; align-items: center; color: #fff; font: 14.700px/20.500px "Open Sans", sans-serif; }
.weather { width: 522px; padding-left: 26px; display: flex; align-items: center; gap: 9px; letter-spacing: -.12px; }
.apps { display: flex; }
.app { width: 49px; height: 50px; margin: 0 3.040px; box-sizing: border-box; display: flex; align-items: center; justify-content: center; position: relative; border-radius: 5px; }
.app svg { width: 29px; height: 29px; overflow: hidden; }
.app .prompt { font: 700 8px "Liberation Mono", monospace; fill: #fff; }
.app .pc { font: 700 11px "Open Sans", sans-serif; fill: #fff; }
.vivado { background: #463429; border: 1px solid #4e3d33; }
.fox::after, .vivado::after { content: ""; position: absolute; bottom: 1px; width: 28px; height: 4px; border-radius: 2px; background: #a39a94; }
.vivado::after { width: 20px; background: #4cc2ff; bottom: 0; }
.tray { margin-left: auto; padding-right: 22px; display: flex; align-items: center; }
.lang { width: 50px; text-align: center; margin: 0 12px 0 2px; letter-spacing: -.1px; }
.clock { text-align: right; width: 80px; margin: 0 10px 0 15px; }
</style>
